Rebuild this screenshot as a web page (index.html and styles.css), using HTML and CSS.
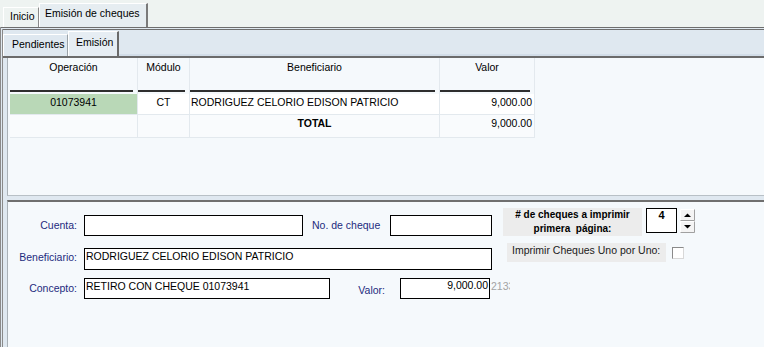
FILE: index.html
```html
<!DOCTYPE html>
<html lang="es">
<head>
<meta charset="utf-8">
<title>Emisión de cheques</title>
<link rel="stylesheet" href="styles.css">
</head>
<body>
<div class="app">
  <div class="maintabs">
    <div class="tab">Inicio</div>
    <div class="tab tab-active">Emisión de cheques</div>
  </div>
  <div class="frame">
    <div class="subtabs">
      <div class="stab">Pendientes</div>
      <div class="stab stab-active">Emisión</div>
    </div>
    <div class="gridpanel">
      <div class="grid">
        <div class="hc">Operación</div>
        <div class="hc">Módulo</div>
        <div class="hc">Beneficiario</div>
        <div class="hc">Valor</div>

        <div class="c r1 center sel">01073941</div>
        <div class="c r1 center">CT</div>
        <div class="c r1 left">RODRIGUEZ CELORIO EDISON PATRICIO</div>
        <div class="c r1 right">9,000.00</div>

        <div class="c r2"></div>
        <div class="c r2"></div>
        <div class="c r2 center bold">TOTAL</div>
        <div class="c r2 right">9,000.00</div>
      </div>
    </div>
    <div class="formpanel">
      <div class="frow frow1">
        <div class="lbl">Cuenta:</div>
        <div class="inp w-cuenta"></div>
        <div class="lbl2">No. de cheque</div>
        <div class="inp w-cheque"></div>
        <div class="graybox gb1">
          <div># de cheques a imprimir</div>
          <div>primera&nbsp; página:</div>
        </div>
        <div class="inp spin">4</div>
        <svg class="spinbtn" width="15" height="24" viewBox="0 0 15 24">
          <rect x="0" y="0" width="15" height="12" fill="#f4f4f4"/>
          <rect x="0" y="12" width="15" height="12" fill="#f4f4f4"/>
          <path d="M0.5 11.5V0.5H14.5" fill="none" stroke="#ffffff"/>
          <path d="M0.5 11.5H14.5V0.5" fill="none" stroke="#a0a0a0"/>
          <path d="M0.5 23.5V12.5H14.5" fill="none" stroke="#ffffff"/>
          <path d="M0.5 23.5H14.5V12.5" fill="none" stroke="#a0a0a0"/>
          <path d="M4 8L7.5 4.5L11 8Z" fill="#000"/>
          <path d="M4 16L11 16L7.5 19.5Z" fill="#000"/>
        </svg>
      </div>
      <div class="frow frow2">
        <div class="lbl">Beneficiario:</div>
        <div class="inp w-benef">RODRIGUEZ CELORIO EDISON PATRICIO</div>
        <div class="graybox gb2">Imprimir Cheques Uno por Uno:</div>
        <div class="chk"></div>
      </div>
      <div class="frow frow3">
        <div class="lbl">Concepto:</div>
        <div class="inp w-concepto">RETIRO CON CHEQUE 01073941</div>
        <div class="lbl3">Valor:</div>
        <div class="inp w-valor">9,000.00</div>
        <div class="extra">2133</div>
      </div>
    </div>
  </div>
</div>
</body>
</html>
```

FILE: styles.css
```css
html, body {
  margin: 0;
  padding: 0;
  height: 100%;
}

body {
  font-family: "Liberation Sans", Arial, sans-serif;
  font-size: 10.5px;
  color: #000;
  background: #f5f9fc;
  overflow: hidden;
}

.app {
  height: 347px;
  display: flex;
  flex-direction: column;
}

/* main tabs */
.maintabs {
  height: 27px;
  background: #eef3f1;
  display: flex;
  align-items: flex-end;
  padding-left: 3px;
  box-sizing: border-box;
}

.tab {
  box-sizing: border-box;
  height: 20px;
  width: 36px;
  padding-left: 6px;
  line-height: 16px;
  border-top: 1px solid #ffffff;
  border-left: 1px solid #ffffff;
  border-right: 1px solid #8a8a8a;
  background: #eef3f1;
  white-space: nowrap;
}

.tab-active {
  height: 24px;
  width: 109px;
  padding-left: 5px;
  line-height: 18px;
  background: #e6edf1;
  border-right: 2px solid #7a7a7a;
}

/* frame */
.frame {
  flex: 1;
  display: flex;
  flex-direction: column;
  border-top: 3px double #6e6e6e;
  border-left: 3px double #8a8a8a;
  background: #dfe8f0;
  min-height: 0;
}

.subtabs {
  height: 28px;
  box-sizing: border-box;
  display: flex;
  align-items: flex-end;
  background: #dfe8f0;
  border-bottom: 2px solid #6b6b6b;
  box-shadow: inset 0 -2px 0 #d2dde8;
}

.stab {
  box-sizing: border-box;
  height: 22px;
  width: 65px;
  padding-left: 8px;
  line-height: 18px;
  border-top: 1px solid #ffffff;
  border-left: 1px solid #ffffff;
  border-right: 1px solid #9aa2a8;
  background: #dfe8f0;
  white-space: nowrap;
}

.stab-active {
  height: 25px;
  width: 51px;
  padding-left: 7px;
  line-height: 21px;
  background: #e6edf3;
  border-right: 2px solid #6a6a6a;
}

/* grid */
.gridpanel {
  height: 137px;
  margin-left: 4px;
  border-left: 1px solid #a9b1b7;
  border-bottom: 1px solid #b8c0c6;
  background: #f5f9fc;
  flex: none;
}

.grid {
  margin-left: 2px;
  display: grid;
  grid-template-columns: 128px 52px 250px 95px;
}

.hc {
  box-sizing: border-box;
  height: 36px;
  line-height: 18px;
  text-align: center;
  border-right: 1px solid #e3e9ee;
  background: linear-gradient(#2e2e2e, #2e2e2e) 0 32px / calc(100% - 4px) 2px no-repeat;
}

.c {
  box-sizing: border-box;
  border-right: 1px solid #e3e9ee;
  border-bottom: 1px solid #e3e9ee;
  white-space: nowrap;
  overflow: hidden;
}

.r1 {
  height: 21px;
  line-height: 17px;
  background: #ffffff;
}

.r2 {
  height: 23px;
  line-height: 16px;
  background: #f9fbfd;
}

.sel {
  background: #b9d8b7;
}

.center { text-align: center; }
.left { text-align: left; padding-left: 1px; }
.right { text-align: right; padding-right: 2px; }
.bold { font-weight: bold; }

/* form */
.formpanel {
  flex: 1;
  margin-left: 4px;
  margin-top: 4px;
  border-left: 1px solid #a9b1b7;
  border-top: 2px solid #6f6f6f;
  background: #f5f9fc;
  padding-top: 6px;
}

.frow {
  display: flex;
}

.frow1 {
  height: 28px;
  align-items: flex-end;
}

.frow2 {
  margin-top: 7px;
  height: 27px;
  align-items: flex-start;
}

.frow3 {
  margin-top: 8px;
  align-items: flex-start;
}

.lbl {
  width: 69px;
  margin-right: 7px;
  text-align: right;
  color: #1d2b7e;
  height: 21px;
  line-height: 21px;
  white-space: nowrap;
}

.frow2 .lbl {
  margin-top: 5px;
  line-height: 18px;
}

.lbl2 {
  margin-left: 9px;
  width: 78px;
  color: #1d2b7e;
  height: 21px;
  line-height: 21px;
  white-space: nowrap;
}

.lbl3 {
  width: 55px;
  padding-right: 15px;
  text-align: right;
  color: #1d2b7e;
  height: 21px;
  line-height: 24px;
  white-space: nowrap;
}

.inp {
  box-sizing: border-box;
  background: #ffffff;
  border: 1px solid #000;
  height: 21px;
  line-height: 14px;
  padding-left: 1px;
  white-space: nowrap;
  overflow: hidden;
  flex: none;
}

.w-cuenta { width: 219px; }
.w-cheque { width: 102px; }
.w-benef { width: 408px; height: 22px; margin-top: 5px; }
.w-concepto { width: 246px; }
.w-valor {
  width: 90px;
  text-align: right;
  padding-right: 1px;
  line-height: 12px;
}

.graybox {
  background: #ececec;
  flex: none;
  box-sizing: border-box;
}

.gb1 {
  margin-left: 11px;
  width: 139px;
  height: 28px;
  font-size: 10px;
  font-weight: bold;
  text-align: center;
  line-height: 14px;
}

.gb2 {
  margin-left: 15px;
  width: 159px;
  height: 19px;
  line-height: 14px;
  padding-left: 5px;
  color: #1a1a1a;
  white-space: nowrap;
}

.spin {
  margin-left: 4px;
  margin-bottom: 3px;
  width: 31px;
  height: 25px;
  text-align: center;
  font-weight: bold;
  font-size: 11px;
  line-height: 13px;
  padding-left: 0;
}

.spinbtn {
  margin-left: 3px;
  margin-bottom: 3px;
  flex: none;
  display: block;
}

.chk {
  margin-left: 6px;
  margin-top: 4px;
  width: 12px;
  height: 12px;
  box-sizing: border-box;
  background: #ffffff;
  border-top: 1px solid #8a8a8a;
  border-left: 1px solid #8a8a8a;
  border-right: 1px solid #d8d8d8;
  border-bottom: 1px solid #d8d8d8;
  flex: none;
}

.extra {
  width: 19px;
  padding-left: 1px;
  overflow: hidden;
  color: #a3a3a3;
  line-height: 16px;
  white-space: nowrap;
}
```
